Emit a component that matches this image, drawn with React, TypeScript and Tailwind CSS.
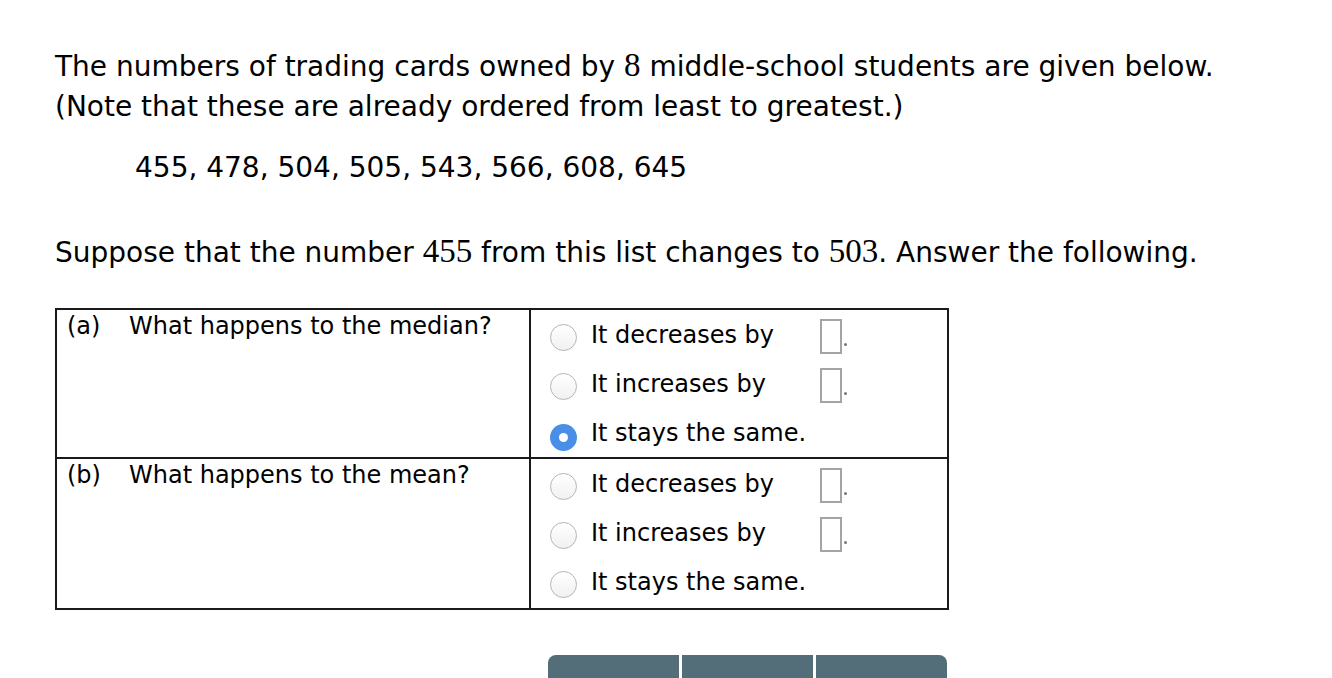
import React, { useState } from "react";

const sans = { fontFamily: '"DejaVu Sans", Verdana, sans-serif' };

const Num = ({ children }: { children: React.ReactNode }) => (
  <span className="font-['Liberation_Serif',serif] text-[33px] leading-none">{children}</span>
);

interface Choice {
  label: string;
  input: boolean;
}

const choices: Choice[] = [
  { label: "It decreases by", input: true },
  { label: "It increases by", input: true },
  { label: "It stays the same.", input: false },
];

const Radio = ({ checked, onClick }: { checked: boolean; onClick: () => void }) =>
  checked ? (
    <button
      onClick={onClick}
      className="w-[27px] h-[27px] rounded-full bg-[#4a8fe7] flex items-center justify-center shrink-0"
    >
      <span className="w-[9px] h-[9px] rounded-full bg-white" />
    </button>
  ) : (
    <button
      onClick={onClick}
      className="w-[27px] h-[27px] rounded-full border border-[#b5b5b5] bg-gradient-to-b from-white to-[#f1f1f1] shrink-0"
    />
  );

const Options = ({ initial }: { initial: number | null }) => {
  const [selected, setSelected] = useState<number | null>(initial);
  return (
    <div className="flex flex-col">
      {choices.map((c, i) => (
        <div key={i} className="flex items-center h-[49px] pl-[19px]">
          <div className="pt-[10px]">
            <Radio checked={selected === i} onClick={() => setSelected(i)} />
          </div>
          <span className="ml-[14px] w-[229px] text-[24px] leading-[28px] text-black">{c.label}</span>
          {c.input && (
            <div className="flex items-end pt-[4px]">
              <div className="w-[22px] h-[35px] border-2 border-[#a4a4a4] bg-white" />
              <span className="ml-[2px] mb-[8px] w-[3px] h-[3px] rounded-full bg-[#777]" />
            </div>
          )}
        </div>
      ))}
    </div>
  );
};

const App = () => {
  return (
    <div className="min-h-screen bg-white overflow-hidden" style={sans}>
      <div className="pl-[55px] pt-[47px] text-[28px] text-black">
        {/* Intro */}
        <p className="leading-[40px]">
          The numbers of trading cards owned by <Num>8</Num> middle-school students are given below.
          <br />
          (Note that these are already ordered from least to greatest.)
        </p>
        <p className="mt-[21px] ml-[80px] leading-[40px]">455, 478, 504, 505, 543, 566, 608, 645</p>

        <p className="mt-[45px] leading-[40px]">
          Suppose that the number <Num>455</Num> from this list changes to <Num>503</Num>. Answer the following.
        </p>

        {/* Question table */}
        <table className="mt-[35px] border-collapse border-2 border-[#1a1a1a] text-[24px] leading-[28px]">
          <tbody>
            <tr>
              <td className="w-[474px] h-[148px] align-top border-2 border-[#1a1a1a] px-[10px] pt-[2px]">
                <div className="flex">
                  <span className="w-[62px]">(a)</span>
                  <span>What happens to the median?</span>
                </div>
              </td>
              <td className="w-[418px] align-top border-2 border-[#1a1a1a] p-0">
                <Options initial={2} />
              </td>
            </tr>
            <tr>
              <td className="h-[151px] align-top border-2 border-[#1a1a1a] px-[10px] pt-[2px]">
                <div className="flex">
                  <span className="w-[62px]">(b)</span>
                  <span>What happens to the mean?</span>
                </div>
              </td>
              <td className="align-top border-2 border-[#1a1a1a] p-0">
                <Options initial={null} />
              </td>
            </tr>
          </tbody>
        </table>

        {/* Action bar */}
        <div className="mt-[45px] ml-[493px] w-[399px] h-[40px] flex gap-[3px]">
          <button className="flex-1 bg-[#546e79] rounded-tl-[8px]" />
          <button className="flex-1 bg-[#546e79]" />
          <button className="flex-1 bg-[#546e79] rounded-tr-[8px]" />
        </div>
      </div>
    </div>
  );
};

export default App;
